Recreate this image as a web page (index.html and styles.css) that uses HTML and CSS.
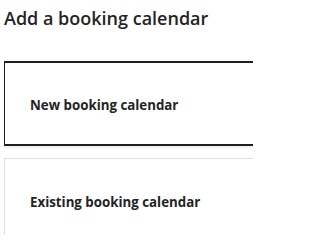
FILE: index.html
```html
<!DOCTYPE html>
<html>
<head>
<meta charset="utf-8">
<link rel="stylesheet" href="styles.css">
</head>
<body>
<main class="page">
  <h1 class="title">Add a booking calendar</h1>
  <div class="cards">
    <div class="card card-selected"><span class="card-label">New booking calendar</span></div>
    <div class="card"><span class="card-label">Existing booking calendar</span></div>
  </div>
</main>
</body>
</html>
```
FILE: styles.css
```css
html, body {
  margin: 0;
  padding: 0;
  background: #ffffff;
}
.page {
  width: 253px;
  height: 235px;
  box-sizing: border-box;
  overflow: hidden;
  padding: 6px 0 0 4px;
  font-family: "Open Sans", "Noto Sans", sans-serif;
  color: #252423;
}
.title {
  margin: 0;
  font-size: 18px;
  font-weight: 600;
  line-height: 24px;
  color: #252423;
}
.cards {
  margin-top: 31px;
  display: flex;
  flex-direction: column;
  gap: 12px;
  width: 320px;
}
.card {
  box-sizing: border-box;
  height: 85px;
  border: 1px solid #e1dfdd;
  display: flex;
  align-items: center;
  padding-left: 25px;
  padding-top: 2px;
}
.card-selected {
  border: 1px solid #201f1e;
  border-top-width: 2px;
  border-bottom-width: 2px;
  box-shadow: 0 2px 4px rgba(0,0,0,0.08);
}
.card-label {
  font-size: 13.3px;
  font-weight: 700;
  color: #252423;
}
```
